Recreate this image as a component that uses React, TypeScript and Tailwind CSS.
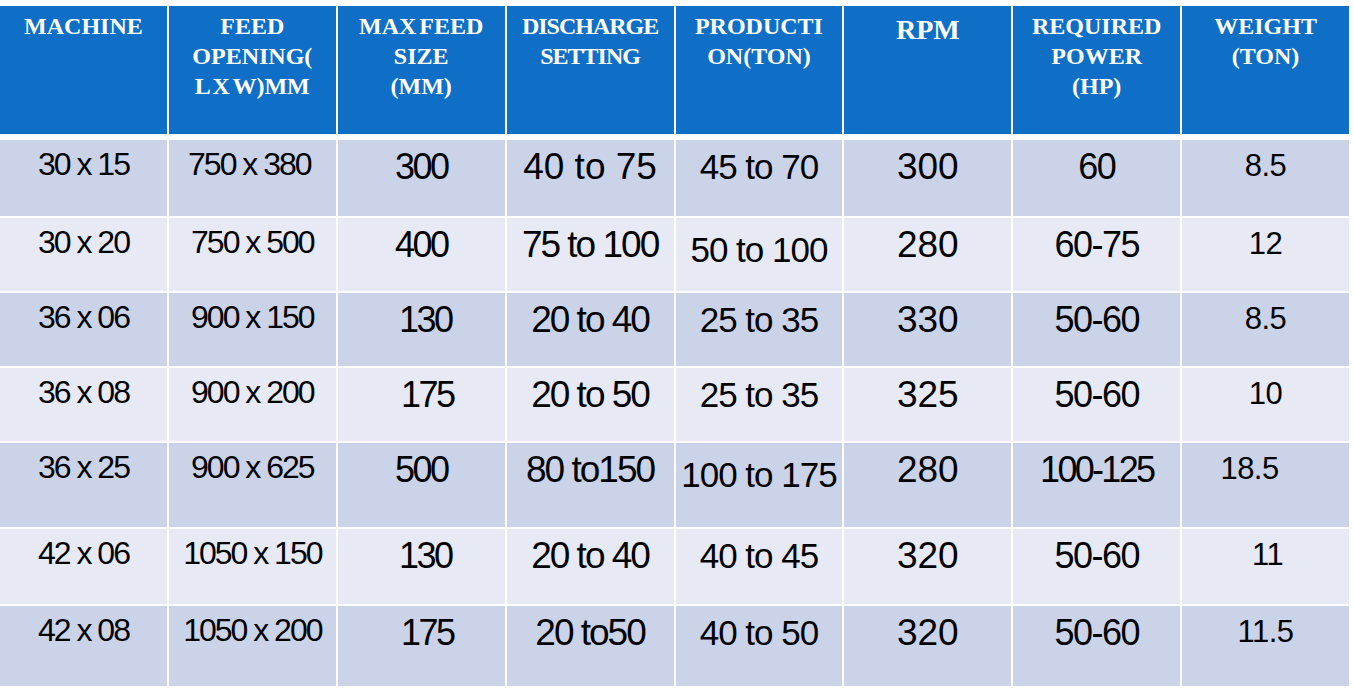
import React from "react";

type Cell = { t: string; c?: string };

const headers: { lines: string[]; c?: string }[] = [
  { lines: ["MACHINE"] },
  { lines: ["FEED", "OPENING(", "L X W)MM"], c: "[word-spacing:-3px]" },
  { lines: ["MAX FEED", "SIZE", "(MM)"], c: "[word-spacing:-3px]" },
  { lines: ["DISCHARGE", "SETTING"], c: "tracking-[-1px]" },
  { lines: ["PRODUCTI", "ON(TON)"] },
  { lines: ["RPM"], c: "text-[28px] pt-[9px]" },
  { lines: ["REQUIRED", "POWER", "(HP)"] },
  { lines: ["WEIGHT", "(TON)"] },
];

// default look of each column
const colClass = [
  "text-[32px] tracking-[-2px] pt-[8px]",
  "text-[32px] tracking-[-2px] pt-[8px]",
  "text-[36px] tracking-[-2.5px] pt-[9px]",
  "text-[37px] tracking-[-2px] pt-[8px]",
  "text-[35px] tracking-[-1px] pt-[9px]",
  "text-[37px] tracking-normal pt-[8px]",
  "text-[36px] tracking-[-1.5px] pt-[9px]",
  "text-[31px] tracking-[-0.5px] pt-[10px]",
];

const rows: { h: string; bg: string; cells: Cell[] }[] = [
  {
    h: "h-[76px]",
    bg: "bg-[#cbd3e8]",
    cells: [
      { t: "30 x 15" },
      { t: "750 x 380", c: "pr-[6px]" },
      { t: "300" },
      { t: "40 to 75", c: "tracking-[0px]" },
      { t: "45 to 70" },
      { t: "300" },
      { t: "60" },
      { t: "8.5" },
    ],
  },
  {
    h: "h-[73px]",
    bg: "bg-[#e7eaf5]",
    cells: [
      { t: "30 x 20" },
      { t: "750 x 500" },
      { t: "400" },
      { t: "75 to 100", c: "tracking-[-0.7px]" },
      { t: "50 to 100", c: "pt-[14px]" },
      { t: "280" },
      { t: "60-75" },
      { t: "12" },
    ],
  },
  {
    h: "h-[73px]",
    bg: "bg-[#cbd3e8]",
    cells: [
      { t: "36 x 06" },
      { t: "900 x 150" },
      { t: "130", c: "pl-[8px]" },
      { t: "20 to 40" },
      { t: "25 to 35" },
      { t: "330" },
      { t: "50-60" },
      { t: "8.5" },
    ],
  },
  {
    h: "h-[73px]",
    bg: "bg-[#e7eaf5]",
    cells: [
      { t: "36 x 08" },
      { t: "900 x 200" },
      { t: "175", c: "pl-[12px]" },
      { t: "20 to 50" },
      { t: "25 to 35" },
      { t: "325" },
      { t: "50-60" },
      { t: "10" },
    ],
  },
  {
    h: "h-[84px]",
    bg: "bg-[#cbd3e8]",
    cells: [
      { t: "36 x 25" },
      { t: "900 x 625" },
      { t: "500" },
      { t: "80 to150", c: "tracking-[-1.5px]" },
      { t: "100 to 175", c: "pt-[14px] tracking-[-1.3px]" },
      { t: "280" },
      { t: "100-125", c: "tracking-[-2.7px]" },
      { t: "18.5", c: "pr-[32px]" },
    ],
  },
  {
    h: "h-[75px]",
    bg: "bg-[#e7eaf5]",
    cells: [
      { t: "42 x 06" },
      { t: "1050 x 150" },
      { t: "130", c: "pl-[8px]" },
      { t: "20 to 40", c: "tracking-[-0.5px]" },
      { t: "40 to 45" },
      { t: "320" },
      { t: "50-60" },
      { t: "11", c: "pl-[4px]" },
    ],
  },
  {
    h: "h-[80px]",
    bg: "bg-[#cbd3e8]",
    cells: [
      { t: "42 x 08" },
      { t: "1050 x 200" },
      { t: "175", c: "pl-[12px]" },
      { t: "20 to50", c: "tracking-[-2.5px]" },
      { t: "40 to 50" },
      { t: "320" },
      { t: "50-60" },
      { t: "11.5" },
    ],
  },
];

export default function App() {
  return (
    <div className="h-[689px] w-[1354px] overflow-hidden bg-white pt-[6px]">
      <div className="flex w-[1349px] flex-col">
        <div className="grid h-[128px] grid-cols-8 gap-x-[2px]">
          {headers.map((hd, i) => (
            <div
              key={i}
              className={`bg-[#0f6fc6] pt-[5px] text-center font-['Liberation_Serif',serif] text-[24px] font-bold leading-[30px] text-white ${hd.c ?? ""}`}
            >
              {hd.lines.map((l) => (
                <div key={l}>{l}</div>
              ))}
            </div>
          ))}
        </div>

        <div className="mt-[6px] flex flex-col gap-y-[2px]">
          {rows.map((row, r) => (
            <div key={r} className={`grid grid-cols-8 gap-x-[2px] ${row.h}`}>
              {row.cells.map((cell, i) => (
                <div
                  key={i}
                  className={`${row.bg} whitespace-nowrap text-center font-['Liberation_Sans',Arial,sans-serif] leading-none text-black ${colClass[i]} ${cell.c ?? ""}`}
                >
                  {cell.t}
                </div>
              ))}
            </div>
          ))}
        </div>
      </div>
    </div>
  );
}
